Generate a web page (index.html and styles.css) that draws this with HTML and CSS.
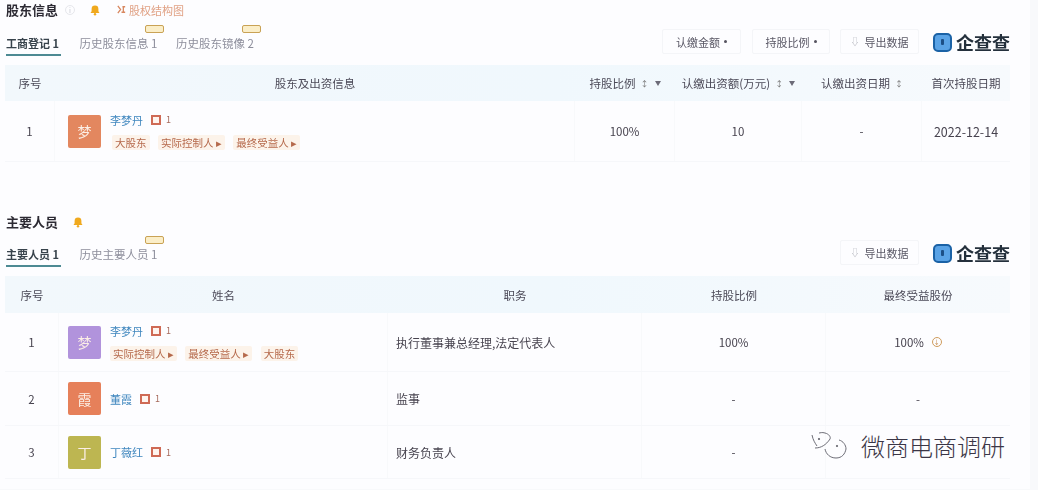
FILE: index.html
```html
<!DOCTYPE html>
<html lang="zh-CN">
<head>
<meta charset="utf-8">
<title>股东信息</title>
<link rel="stylesheet" href="styles.css">
</head>
<body>
<main class="page">
  <section class="sec sec-holders">
    <div class="title-row">
      <h2 class="title">股东信息</h2>
      <span class="info">i</span>
      <svg class="bell" viewBox="0 0 12 12"><path d="M6 1.500a3.400 3.400 0 0 0-3.400 3.400v2.400L1.500 9h9L9.400 7.300V4.900A3.400 3.400 0 0 0 6 1.500z"/><circle cx="6" cy="10.200" r="1.200"/></svg>
      <span class="struct"><svg class="struct-icon" viewBox="0 0 12 12"><path d="M2 2l3 4-3 4M7 3l3 0M6 9l4 0M8 3v6"/></svg>股权结构图</span>
    </div>
    <div class="bar">
      <div class="tabs">
        <span class="tab active">工商登记 1</span>
        <span class="tab">历史股东信息 1<i class="flag"></i></span>
        <span class="tab">历史股东镜像 2<i class="flag"></i></span>
      </div>
      <div class="tools">
        <span class="btn btn-a">认缴金额 <b class="caret"></b></span>
        <span class="btn btn-b">持股比例 <b class="caret"></b></span>
        <span class="btn btn-c"><em class="dl">⇩</em>导出数据</span>
        <span class="logo"><i class="logo-mark"><i class="logo-dot"></i></i>企查查</span>
      </div>
    </div>
    <div class="table t1">
      <div class="row head">
        <div class="c">序号</div>
        <div class="c">股东及出资信息</div>
        <div class="c">持股比例<span class="sort">↕</span><span class="filter"></span></div>
        <div class="c">认缴出资额(万元)<span class="sort">↕</span><span class="filter"></span></div>
        <div class="c">认缴出资日期<span class="sort">↕</span></div>
        <div class="c">首次持股日期</div>
      </div>
      <div class="row r-tall">
        <div class="c">1</div>
        <div class="c person">
          <span class="avatar a-orange">梦</span>
          <div class="pinfo">
            <div class="name-line"><span class="name">李梦丹</span><i class="stock"></i><span class="cnt">1</span></div>
            <div class="tags"><span class="tag">大股东</span><span class="tag">实际控制人 ▸</span><span class="tag">最终受益人 ▸</span></div>
          </div>
        </div>
        <div class="c">100%</div>
        <div class="c">10</div>
        <div class="c">-</div>
        <div class="c date">2022-12-14</div>
      </div>
    </div>
  </section>

  <section class="sec sec-staff">
    <div class="title-row">
      <h2 class="title">主要人员</h2>
      <svg class="bell" viewBox="0 0 12 12"><path d="M6 1.500a3.400 3.400 0 0 0-3.400 3.400v2.400L1.500 9h9L9.400 7.300V4.900A3.400 3.400 0 0 0 6 1.500z"/><circle cx="6" cy="10.200" r="1.200"/></svg>
    </div>
    <div class="bar">
      <div class="tabs">
        <span class="tab active">主要人员 1</span>
        <span class="tab">历史主要人员 1<i class="flag"></i></span>
      </div>
      <div class="tools">
        <span class="btn btn-c"><em class="dl">⇩</em>导出数据</span>
        <span class="logo"><i class="logo-mark"><i class="logo-dot"></i></i>企查查</span>
      </div>
    </div>
    <div class="table t2">
      <div class="row head">
        <div class="c">序号</div>
        <div class="c">姓名</div>
        <div class="c">职务</div>
        <div class="c">持股比例</div>
        <div class="c">最终受益股份</div>
      </div>
      <div class="row r-a">
        <div class="c">1</div>
        <div class="c person">
          <span class="avatar a-purple">梦</span>
          <div class="pinfo">
            <div class="name-line"><span class="name">李梦丹</span><i class="stock"></i><span class="cnt">1</span></div>
            <div class="tags"><span class="tag">实际控制人 ▸</span><span class="tag">最终受益人 ▸</span><span class="tag">大股东</span></div>
          </div>
        </div>
        <div class="c left">执行董事兼总经理,法定代表人</div>
        <div class="c">100%</div>
        <div class="c">100%<span class="clock">↓</span></div>
      </div>
      <div class="row r-b">
        <div class="c">2</div>
        <div class="c person">
          <span class="avatar a-coral">霞</span>
          <div class="pinfo"><div class="name-line"><span class="name">董霞</span><i class="stock"></i><span class="cnt">1</span></div></div>
        </div>
        <div class="c left">监事</div>
        <div class="c">-</div>
        <div class="c">-</div>
      </div>
      <div class="row r-c">
        <div class="c">3</div>
        <div class="c person">
          <span class="avatar a-olive">丁</span>
          <div class="pinfo"><div class="name-line"><span class="name">丁薇红</span><i class="stock"></i><span class="cnt">1</span></div></div>
        </div>
        <div class="c left">财务负责人</div>
        <div class="c">-</div>
        <div class="c"></div>
      </div>
    </div>
  </section>
</main>
<div class="mark">
  <svg class="wechat" viewBox="0 0 38 30"><path d="M2 4c1 5 3 8 5 11M5 17c6 0 11-3 15-9 1-2-1-5-5-6-3-1-5 0-6 0"/><path d="M15 18c1 5 5 9 11 9 6 0 9-4 10-9 0-4-3-8-7-9"/><circle cx="9" cy="8" r=".7"/><circle cx="27" cy="15" r=".7"/></svg>
  <span class="mark-text">微商电商调研</span>
</div>
</body>
</html>
```
FILE: styles.css
```css
* { box-sizing: border-box; }
html, body { margin: 0; height: 490px; overflow: hidden; }
body {
  position: relative;
  background: #f8f9fb;
  font-family: "Noto Sans CJK SC", "Noto Sans", sans-serif;
  font-size: 10px;
  color: #47434f;
}
.page {
  width: 1030px;
  height: 489px;
  background: #fdfdff;
  padding: 0 20px 0 5px;
  filter: blur(0.5px);
}
.sec-holders { height: 213px; padding-top: 1px; }
.sec-holders .bar { margin-top: 11px; height: 36px; }
.title-row { display: flex; align-items: center; height: 17px; padding-left: 1px; }
.title { margin: 0; font-size: 13px; line-height: 17px; font-weight: 700; color: #2c2a33; }
.info {
  width: 10px; height: 10px; margin-left: 7px;
  border: 1px solid #e6e7ec; border-radius: 50%;
  font-size: 7px; line-height: 8px; text-align: center; color: #c9cbd2;
}
.bell { width: 12px; height: 12px; margin-left: 14px; fill: #f0a91e; }
.struct { display: flex; align-items: center; margin-left: 15px; font-size: 11px; color: #e0a184; }
.struct-icon { width: 11px; height: 11px; margin-right: 2px; fill: none; stroke: #d8875f; stroke-width: 1.400; }
.bar { display: flex; justify-content: space-between; margin-top: 10px; height: 36px; padding-left: 1px; }
.tabs { display: flex; gap: 18.500px; }
.tab {
  position: relative;
  height: 27px;
  padding-top: 7px;
  font-size: 11.500px;
  line-height: 14px;
  color: #8d8e9c;
}
.tab.active { width: 55px; color: #38434c; font-weight: 700; font-size: 11px; border-bottom: 2px solid #4d8a93; white-space: nowrap; }
.flag {
  position: absolute;
  right: -7px; top: -4px;
  width: 19px; height: 8px;
  background: #fbeec8;
  border: 1.500px solid #c9a255;
  border-radius: 2px;
}
.tools { display: flex; align-items: flex-start; }
.btn {
  height: 25px;
  display: flex; align-items: center; justify-content: center;
  border: 1px solid #f4f5f8;
  border-radius: 2px;
  font-size: 11px;
  color: #5a5866;
  white-space: nowrap;
}
.btn-a { width: 79px; }
.btn-b { width: 78px; margin-left: 11px; }
.btn-c { width: 79px; margin-left: 10px; }
.caret { width: 3px; height: 3px; margin-left: 4px; background: #55535f; border-radius: 50%; }
.dl { font-style: normal; font-size: 9px; color: #b5b6be; margin-right: 5px; }
.logo {
  display: flex; align-items: center; width: 77px; height: 22px; margin: 2px 0 0 14px;
  font-size: 18px; font-weight: 700; color: #24303c;
  white-space: nowrap;
}
.logo-mark {
  display: flex; align-items: center; justify-content: center;
  width: 19px; height: 19px; margin-right: 4px;
  background: #5aa3e6; border: 2px solid #1b62a6; border-radius: 5px;
}
.logo-dot { width: 3px; height: 6px; background: #1c4f86; border-radius: 1px; }
.table { width: 1005px; }
.row { display: grid; align-items: stretch; border-bottom: 1px solid #f6f7fa; }
.t1 .row { grid-template-columns: 50px 520px 100px 127px 120px 88px; }
.t2 .row { grid-template-columns: 54px 329px 254px 184px 184px; }
.head {
  height: 37px;
  background: linear-gradient(90deg, #f2f8fc, #f0f8fd 55%, #f7fafd);
  border-bottom: 0;
  color: #4c4a58;
}
.t1 .head { height: 36px; }
.c { display: flex; align-items: center; justify-content: center; font-size: 11.500px; border-right: 1px solid #f8f9fb; white-space: nowrap; }
.c:last-child { border-right: 0; }
.head .c { border-right: 0; }
.date { font-size: 12.500px; }
.r-tall { height: 61px; }
.r-a { height: 59px; }
.r-b { height: 54px; }
.r-c { height: 53px; }
.left { justify-content: flex-start; padding-left: 8px; font-size: 12px; color: #47434f; }
.person { justify-content: flex-start; padding-left: 13px; }
.t2 .person { padding-left: 9px; }
.avatar {
  flex: none;
  display: flex; align-items: center; justify-content: center;
  width: 33px; height: 33px;
  border-radius: 2px;
  font-size: 14px;
  color: #fbeee5;
}
.a-orange { background: #e3875f; }
.a-purple { background: #b193dc; }
.a-coral { background: #e6805a; }
.a-olive { background: #bdb651; }
.pinfo { margin-left: 9px; display: flex; flex-direction: column; gap: 8px; }
.name-line { display: flex; align-items: center; height: 14px; }
.name { font-size: 11px; color: #3f86be; }
.stock {
  width: 10px; height: 10px; margin-left: 8px;
  border: 2px solid #cf6a55; background: #fff4ee;
}
.cnt { margin-left: 5px; font-size: 9px; color: #a66a5c; }
.tags { display: flex; gap: 8.500px; }
.t1 .tags { margin-left: 2px; }
.tag {
  height: 15px; padding: 0 3px;
  background: #fcf3ea;
  border-radius: 2px;
  font-size: 10.500px; line-height: 15px;
  color: #b5694b;
  white-space: nowrap;
}
.sort { margin-left: 5px; font-size: 8px; color: #777; }
.filter {
  margin-left: 6px; width: 0; height: 0;
  border-left: 3px solid transparent;
  border-right: 3px solid transparent;
  border-top: 5px solid #6c6b78;
}
.clock {
  width: 10px; height: 10px; margin-left: 8px;
  border: 1px solid #cf9c5d; border-radius: 50%;
  font-size: 6px; line-height: 8px; text-align: center; color: #c0813f;
}
.mark {
  position: absolute;
  left: 810px; top: 431px;
  display: flex; align-items: center;
  height: 30px;
}
.wechat { width: 38px; height: 30px; fill: #555; stroke: #6d6d76; stroke-width: 1; }
.wechat path { fill: none; }
.mark-text {
  margin-left: 13px;
  font-size: 24px; line-height: 28px; font-weight: 300;
  color: #3b3646;
  white-space: nowrap;
}
```
